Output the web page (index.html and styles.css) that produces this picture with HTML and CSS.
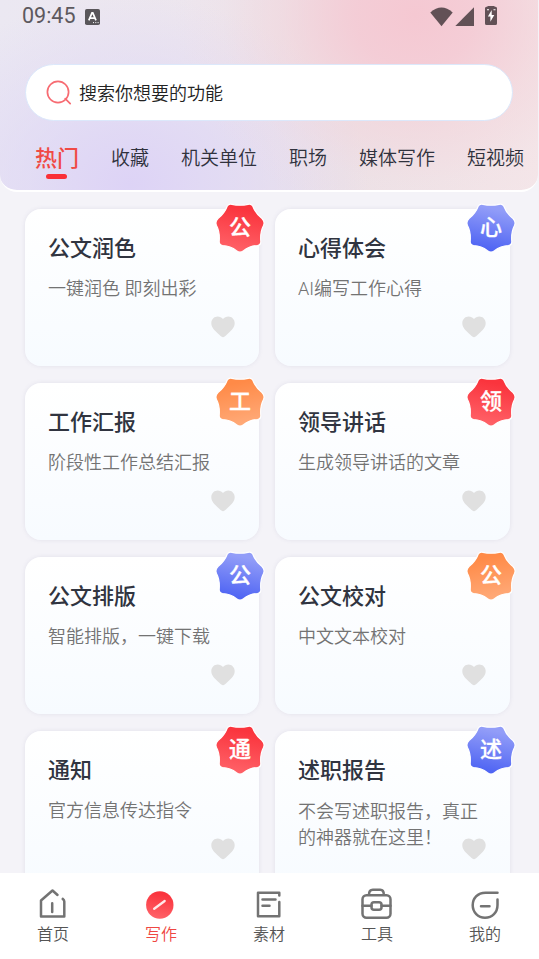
FILE: index.html
```html
<!DOCTYPE html>
<html lang="zh-CN">
<head>
<meta charset="utf-8">
<title>写作</title>
<link rel="stylesheet" href="styles.css">
</head>
<body>
<svg class="defs" width="0" height="0" aria-hidden="true">
  <defs>
    <linearGradient id="red" x1="0.6" y1="0" x2="0.4" y2="1"><stop offset="0.1" stop-color="#fa343d"/><stop offset="1" stop-color="#ff6369"/></linearGradient>
    <linearGradient id="blue" x1="0.6" y1="0" x2="0.4" y2="1"><stop offset="0.1" stop-color="#929df8"/><stop offset="1" stop-color="#4b61f3"/></linearGradient>
    <linearGradient id="orange" x1="0.4" y1="0" x2="0.6" y2="1"><stop offset="0.1" stop-color="#ff8a47"/><stop offset="1" stop-color="#ffab7a"/></linearGradient>
    <symbol id="seal" viewBox="0 0 50 50">
      <path d="M17 1.300Q13.800.5 12.300 3Q9.500 10.500 3 15.500Q-.2 18.800 1.500 22.500Q5 29 4.200 38.500Q4 42 7.500 42.500Q15.500 42.800 21.500 47.700Q25 50.300 28.500 47.700Q34.500 42.800 42.500 42.500Q46 42 45.800 38.500Q45 29 48.500 22.500Q50.200 18.800 47 15.500Q40.500 10.500 37.700 3Q36.200.5 33 1.300Q25 3.200 17 1.300Z"/>
    </symbol>
    <symbol id="heart" viewBox="0 0 24 22"><path d="M12 21.300C10.900 21.300 10 20.300 8 18.500C3.500 14.600 .3 11.700.3 7.100C.3 3.400 3.100.5 6.700.5C8.800.5 10.700 1.400 12 3C13.300 1.400 15.200.5 17.300.5C20.900.5 23.700 3.400 23.700 7.100C23.700 11.700 20.500 14.600 16 18.500C14 20.300 13.100 21.300 12 21.300Z"/></symbol>
  </defs>
</svg>
<div class="app">
  <header class="top">
    <div class="status">
      <span class="clock">09:45</span>
      <svg class="input-mode" width="15" height="16" viewBox="0 0 15 16"><rect width="15" height="16" rx="1.800" fill="#59565a"/><path d="M3.800 11.300L7 3.800h.8L11 11.300M5 9.200h4.800" fill="none" stroke="#fff" stroke-width="1.700"/><path d="M8 13.600h1M10.300 13.600h1M12.600 13.600h1" stroke="#fff"/></svg>
      <svg class="signals" width="68" height="22" viewBox="0 0 68 22" fill="#625156"><path d="M.3 6.500Q11.500-3.500 22.700 6.500L11.500 20.200Z"/><path d="M44 1.300V20H25.300Z"/><path d="M57.500.8V0h7v.8h1Q67 .8 67 2.300v15.200Q67 19 65.500 19h-9Q55 19 55 17.500V2.300Q55 .8 56.500 .8Z"/><path d="M61.700 4L57.900 10.500h2.500v5.200L64.300 8.900h-2.600ZM57 3.200h2v1h-2ZM63.500 3.200h2v1h-2Z" fill="#fff"/></svg>
    </div>
    <div class="search">
      <svg width="26" height="26" viewBox="0 0 26 26" fill="none" stroke="#f76b72" stroke-width="1.700" stroke-linecap="round"><circle cx="12" cy="12" r="10.600"/><path d="M19.200 18.700L24.200 23.700"/></svg>
      <span>搜索你想要的功能</span>
    </div>
    <nav class="tabs">
      <span class="tab on">热门</span><span class="tab">收藏</span><span class="tab">机关单位</span><span class="tab">职场</span><span class="tab">媒体写作</span><span class="tab">短视频</span>
    </nav>
  </header>
  <main class="grid">
    <article class="card"><h2>公文润色</h2><p>一键润色 即刻出彩</p><div class="badge red"><svg><use href="#seal"/></svg><b>公</b></div><svg class="heart"><use href="#heart"/></svg></article>
    <article class="card"><h2>心得体会</h2><p>AI编写工作心得</p><div class="badge blue"><svg><use href="#seal"/></svg><b>心</b></div><svg class="heart"><use href="#heart"/></svg></article>
    <article class="card"><h2>工作汇报</h2><p>阶段性工作总结汇报</p><div class="badge orange"><svg><use href="#seal"/></svg><b>工</b></div><svg class="heart"><use href="#heart"/></svg></article>
    <article class="card"><h2>领导讲话</h2><p>生成领导讲话的文章</p><div class="badge red"><svg><use href="#seal"/></svg><b>领</b></div><svg class="heart"><use href="#heart"/></svg></article>
    <article class="card"><h2>公文排版</h2><p>智能排版，一键下载</p><div class="badge blue"><svg><use href="#seal"/></svg><b>公</b></div><svg class="heart"><use href="#heart"/></svg></article>
    <article class="card"><h2>公文校对</h2><p>中文文本校对</p><div class="badge orange"><svg><use href="#seal"/></svg><b>公</b></div><svg class="heart"><use href="#heart"/></svg></article>
    <article class="card"><h2>通知</h2><p>官方信息传达指令</p><div class="badge red"><svg><use href="#seal"/></svg><b>通</b></div><svg class="heart"><use href="#heart"/></svg></article>
    <article class="card"><h2>述职报告</h2><p class="long">不会写述职报告，真正的神器就在这里！</p><div class="badge blue"><svg><use href="#seal"/></svg><b>述</b></div><svg class="heart"><use href="#heart"/></svg></article>
  </main>
  <nav class="bottom">
    <div class="item"><svg viewBox="0 0 34 34"><path d="M21.500 8L16.500 3.500L5 13.500V29.500H28.300V14.500Q28.300 13 26.700 11.900M16.200 16.300v8.700"/></svg><span>首页</span></div>
    <div class="item on"><svg viewBox="0 0 34 34"><circle cx="15.800" cy="18" r="13.700" fill="url(#red)" stroke="none"/><path d="M10.200 21.700L20.700 14" stroke="#ffe9e9" stroke-width="2.300"/></svg><span>写作</span></div>
    <div class="item"><svg viewBox="0 0 34 34"><path d="M27.300 8.500V5.700H6V29.300H27.300V15M10.500 12.500h13M10.500 18.700h7"/></svg><span>素材</span></div>
    <div class="item"><svg viewBox="0 0 34 34"><rect x="2.500" y="8.200" width="28" height="22.500" rx="4"/><path d="M9 7.500Q9 2.700 12.800 2.700h7.500Q23.800 2.700 23.800 7.500M2.500 18.800H11.500M21.500 18.800h9"/><rect x="11.500" y="15.200" width="10" height="7.500" rx="2.500"/></svg><span>工具</span></div>
    <div class="item"><svg viewBox="0 0 34 34"><path d="M29.500 5.700H17.500C9.500 5.700 4.700 11.500 4.700 18.300S10 30.700 17 30.700C24.300 30.700 29.500 25.500 29.500 18V12.500M13 19.300h8.500"/></svg><span>我的</span></div>
  </nav>
</div>
</body>
</html>
```
FILE: styles.css
```css
* { box-sizing: border-box; }
body {
  margin: 0;
  background: #f4f3f8;
  font-family: Roboto, "Noto Sans CJK SC", sans-serif;
  font-weight: 300;
}
.defs { position: absolute; }
.app { height: 959px; display: flex; flex-direction: column; overflow: hidden; }
.top {
  flex: none;
  width: 538px;
  height: 192px;
  border-bottom: 2px solid #fff;
  border-radius: 0 0 17px 17px;
  background:
    radial-gradient(ellipse 240px 210px at 415px 15px, #f5c8d2 0%, rgba(245, 201, 211, 0.85) 25%, rgba(244, 208, 215, 0.45) 55%, rgba(243, 215, 220, 0.12) 80%, rgba(243, 215, 220, 0) 100%),
    radial-gradient(ellipse 240px 190px at 130px 185px, #ddd3f6 0%, rgba(222, 215, 246, 0.7) 40%, rgba(225, 220, 245, 0) 100%),
    linear-gradient(95deg, #ebe8f2 0%, #ede6ee 35%, #ece2e7 65%, #f4e6e9 100%);
}
.status { height: 65px; padding: 5px 0 0 22px; display: flex; align-items: flex-start; }
.clock { font: 400 21.500px/22px Roboto; width: 63px; color: #5d595e; }
.input-mode { margin-top: 4px; }
.signals { margin: 1px 0 0 330px; }
.search {
  width: 488px;
  height: 57px;
  margin: -1px 0 0 25px;
  padding-left: 20px;
  border: 1px solid #dce8fb;
  border-radius: 29px;
  background: #fff;
  display: flex;
  align-items: center;
  gap: 7px;
  font-size: 18px;
  font-weight: 350;
  color: #222;
}
.search span { margin-top: -1px; }
.tabs {
  height: 68px;
  padding: 18px 0 0 35px;
  display: flex;
  gap: 32px;
  white-space: nowrap;
  font-size: 19px;
  line-height: 40px;
  color: #30323d;
  font-weight: 350;
}
.tab { flex: none; }
.tab.on {
  display: flex;
  flex-direction: column;
  align-items: center;
  font-size: 22px;
  font-weight: 500;
  color: #f04a45;
}
.tab.on::after { content: ""; width: 21px; height: 5px; margin: -5px 1px 0 0; border-radius: 3px; background: #fa3037; }
.grid {
  flex: 1;
  min-height: 0;
  overflow: hidden;
  padding: 17px 29px 0 25px;
  display: grid;
  grid-template-columns: 234px 235px;
  grid-auto-rows: 157px;
  gap: 17px 16px;
}
.card {
  position: relative;
  padding: 20px 24px 20px 23px;
  border-radius: 16px;
  background: linear-gradient(#fff, #f7fbff);
  box-shadow: 0 0 4px rgba(110, 110, 150, 0.13);
}
.card h2 { margin: 0; font-size: 22px; line-height: 40px; font-weight: 500; color: #303440; }
.card p { margin: 7px 0 0; font-size: 18px; line-height: 26px; font-weight: 350; color: #737373; }
.card p.long { margin-top: 8px; }
.badge { position: absolute; right: -6px; top: -6.500px; width: 50px; height: 50px; display: grid; place-items: center; }
.badge svg { position: absolute; width: 50px; height: 50px; overflow: visible; stroke: #fff; stroke-width: 1.200px; }
.badge b { position: relative; color: #fff; font-size: 22px; line-height: 30px; font-weight: 500; -webkit-text-stroke: 0.300px #fff; }
.red svg { fill: url(#red); }
.blue svg { fill: url(#blue); }
.orange svg { fill: url(#orange); }
.heart { position: absolute; right: 24px; bottom: 28.500px; width: 24px; height: 22px; fill: #e0e0e0; }
.bottom { flex: none; height: 86px; background: #fff; display: grid; grid-template-columns: repeat(5, 108px); }
.item { padding: 14px 2px 0 0; display: flex; flex-direction: column; align-items: center; gap: 2px; color: #555; font-size: 16px; line-height: 24px; font-weight: 350; }
.item svg { width: 34px; height: 34px; fill: none; stroke: #737373; stroke-width: 2.500; stroke-linejoin: round; stroke-linecap: round; }
.item.on { color: #ef4742; }
```
